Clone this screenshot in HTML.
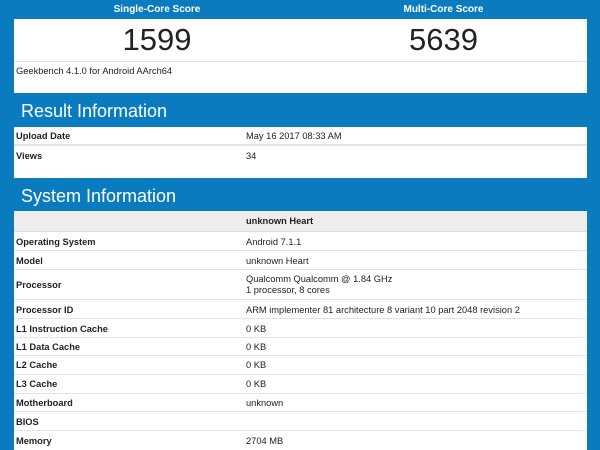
<!DOCTYPE html>
<html><head><meta charset="utf-8"><style>
*{margin:0;padding:0;box-sizing:border-box}
body{width:600px;height:450px;overflow:hidden;background:#0b7bc0;font-family:"Liberation Sans",Arial,sans-serif;color:#222;position:relative}
.a{position:absolute}
.w{position:absolute;left:14px;width:573px;background:#fff}
.hd{color:#fff;font-weight:bold;font-size:10px;text-align:center;top:4px}
.big{font-size:31px;color:#222;top:22px;text-align:center}
.sec{color:#fff;font-size:18px;left:21px}
.row{position:absolute;left:14px;width:573px;border-bottom:1px solid #e4e4e4;background:#fff;font-size:9.3px}
.row b{position:absolute;left:2px}
.row span{position:absolute;left:232px}
</style></head><body>
<div class="a hd" style="left:14px;width:286px">Single-Core Score</div>
<div class="a hd" style="left:300px;width:287px">Multi-Core Score</div>
<div class="w" style="top:19px;height:74px"></div>
<div class="a big" style="left:14px;width:286px">1599</div>
<div class="a big" style="left:300px;width:287px">5639</div>
<div class="a" style="left:14px;top:61px;width:573px;border-top:1px solid #e4e4e4"></div>
<div class="a" style="left:16px;top:66px;font-size:9.3px">Geekbench 4.1.0 for Android AArch64</div>
<div class="a sec" style="top:101px">Result Information</div>
<div class="row" style="top:127px;height:19px;border-bottom:2px solid #e4e4e4"><b style="top:4px">Upload Date</b><span style="top:4px">May 16 2017 08:33 AM</span></div>
<div class="row" style="top:146px;height:32px;border-bottom:none"><b style="top:5px">Views</b><span style="top:5px">34</span></div>
<div class="a sec" style="top:186px">System Information</div>
<div class="w" style="top:211px;height:239px"></div>
<div class="row" style="top:211px;height:21px;background:#eee;border-bottom:1px solid #ddd"><span style="top:5px;font-weight:bold">unknown Heart</span></div>
<div class="row" style="top:232px;height:19px"><b style="top:5px">Operating System</b><span style="top:5px">Android 7.1.1</span></div>
<div class="row" style="top:251px;height:19px"><b style="top:5px">Model</b><span style="top:5px">unknown Heart</span></div>
<div class="row" style="top:270px;height:30px"><b style="top:10px">Processor</b><span style="top:4px;line-height:11px">Qualcomm Qualcomm @ 1.84 GHz<br>1 processor, 8 cores</span></div>
<div class="row" style="top:300px;height:19px"><b style="top:5px">Processor ID</b><span style="top:5px">ARM implementer 81 architecture 8 variant 10 part 2048 revision 2</span></div>
<div class="row" style="top:319px;height:19px"><b style="top:5px">L1 Instruction Cache</b><span style="top:5px">0 KB</span></div>
<div class="row" style="top:338px;height:18px"><b style="top:4px">L1 Data Cache</b><span style="top:4px">0 KB</span></div>
<div class="row" style="top:356px;height:19px"><b style="top:4px">L2 Cache</b><span style="top:4px">0 KB</span></div>
<div class="row" style="top:375px;height:19px"><b style="top:4px">L3 Cache</b><span style="top:4px">0 KB</span></div>
<div class="row" style="top:394px;height:18px"><b style="top:4px">Motherboard</b><span style="top:4px">unknown</span></div>
<div class="row" style="top:412px;height:19px"><b style="top:5px">BIOS</b></div>
<div class="row" style="top:431px;height:19px;border-bottom:none"><b style="top:5px">Memory</b><span style="top:5px">2704 MB</span></div>
</body></html>
